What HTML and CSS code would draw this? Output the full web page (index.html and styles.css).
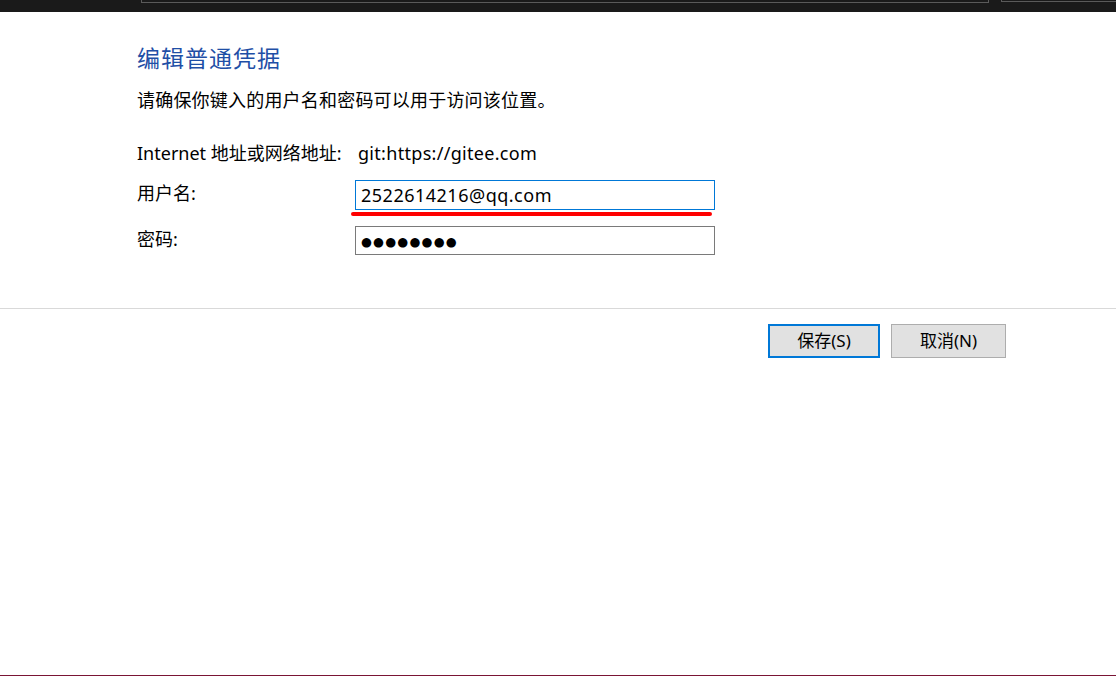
FILE: index.html
```html
<!DOCTYPE html>
<html lang="zh-CN">
<head>
<meta charset="utf-8">
<title>编辑普通凭据</title>
<link rel="stylesheet" href="styles.css">
</head>
<body>
<div class="page">
  <div class="topbar">
    <div class="frame frame-a"></div>
    <div class="frame frame-b"></div>
  </div>
  <div class="content">
    <h1 class="title">编辑普通凭据</h1>
    <p class="subtitle">请确保你键入的用户名和密码可以用于访问该位置。</p>
    <div class="form">
      <div class="label">Internet 地址或网络地址:</div>
      <div class="value">git:https://gitee.com</div>
      <div class="label label-field">用户名:</div>
      <div class="field-wrap">
        <div class="field field-focus">2522614216@qq.com</div>
        <div class="mark"></div>
      </div>
      <div class="label label-field label-pass">密码:</div>
      <div class="field-wrap">
        <div class="field field-pass"><span class="dots">●●●●●●●●</span></div>
      </div>
    </div>
  </div>
  <div class="divider"></div>
  <div class="actions">
    <button class="btn btn-default">保存(S)</button>
    <button class="btn">取消(N)</button>
  </div>
  <div class="spacer"></div>
  <div class="bottomline"></div>
</div>
</body>
</html>
```
FILE: styles.css
```css
html, body {
  margin: 0;
  padding: 0;
  background: #ffffff;
}
body {
  font-family: "Noto Sans", "Noto Sans CJK SC", sans-serif;
  color: #000000;
}
.page {
  width: 1116px;
  height: 684px;
  display: flex;
  flex-direction: column;
  overflow: hidden;
}
.topbar {
  height: 12px;
  background: #1a1a1a;
  display: flex;
  align-items: flex-start;
  flex: none;
}
.frame {
  box-sizing: border-box;
  border: 1px solid #5a5a5a;
  border-top: none;
}
.frame-a {
  margin-left: 141px;
  width: 848px;
  height: 3px;
}
.frame-b {
  margin-left: 12px;
  flex: 1;
  height: 2px;
  border-right: none;
}
.content {
  padding: 29px 0 0 137px;
  flex: none;
}
.title {
  margin: 0;
  font-family: "Noto Sans CJK SC", sans-serif;
  font-weight: normal;
  font-size: 23px;
  line-height: 32px;
  color: #1f4fa6;
  letter-spacing: 1px;
}
.subtitle {
  margin: 14px 0 0;
  font-size: 18px;
  line-height: 26px;
  letter-spacing: 0.2px;
}
.form {
  margin-top: 27px;
  display: grid;
  grid-template-columns: 218px 360px;
  row-gap: 14px;
  align-items: center;
  font-size: 18px;
}
.label, .value {
  line-height: 26px;
}
.value {
  margin-left: 3px;
  letter-spacing: 0.3px;
}
.label-field {
  align-self: start;
}
.field-wrap {
  position: relative;
}
.field {
  box-sizing: border-box;
  height: 30px;
  border: 1px solid #7a7a7a;
  padding: 0 5px;
  font-size: 18px;
  line-height: 28px;
  letter-spacing: 0.5px;
  white-space: nowrap;
}
.field-focus {
  border-color: #0078d7;
}
.field-wrap + .label + .field-wrap {
  margin-top: 2px;
}
.label-pass {
  margin-top: 1px;
  padding-top: 1px;
}
.field-pass {
  height: 29px;
  line-height: 27px;
}
.dots {
  font-family: "DejaVu Sans", sans-serif;
  font-size: 12.5px;
  letter-spacing: 1.2px;
  position: relative;
  top: -1px;
}
.mark {
  position: absolute;
  left: -4px;
  top: 32px;
  width: 361px;
  height: 4px;
  border-radius: 2px;
  background: #ff0000;
}
.divider {
  margin-top: 53px;
  height: 1px;
  background: #d9d9d9;
  flex: none;
}
.actions {
  margin-top: 15px;
  display: flex;
  justify-content: flex-end;
  gap: 11px;
  padding-right: 110px;
  flex: none;
}
.btn {
  box-sizing: border-box;
  height: 34px;
  width: 112px;
  border: 1px solid #adadad;
  background: #e1e1e1;
  font-family: "Noto Sans", "Noto Sans CJK SC", sans-serif;
  font-size: 17px;
  color: #000;
  padding: 0;
  line-height: 30px;
}
.btn + .btn {
  width: 115px;
}
.btn-default {
  border: 2px solid #0078d7;
}
.spacer {
  flex: 1;
}
.bottomline {
  height: 1px;
  background: #7a1535;
  margin-bottom: 8px;
  flex: none;
}
```
